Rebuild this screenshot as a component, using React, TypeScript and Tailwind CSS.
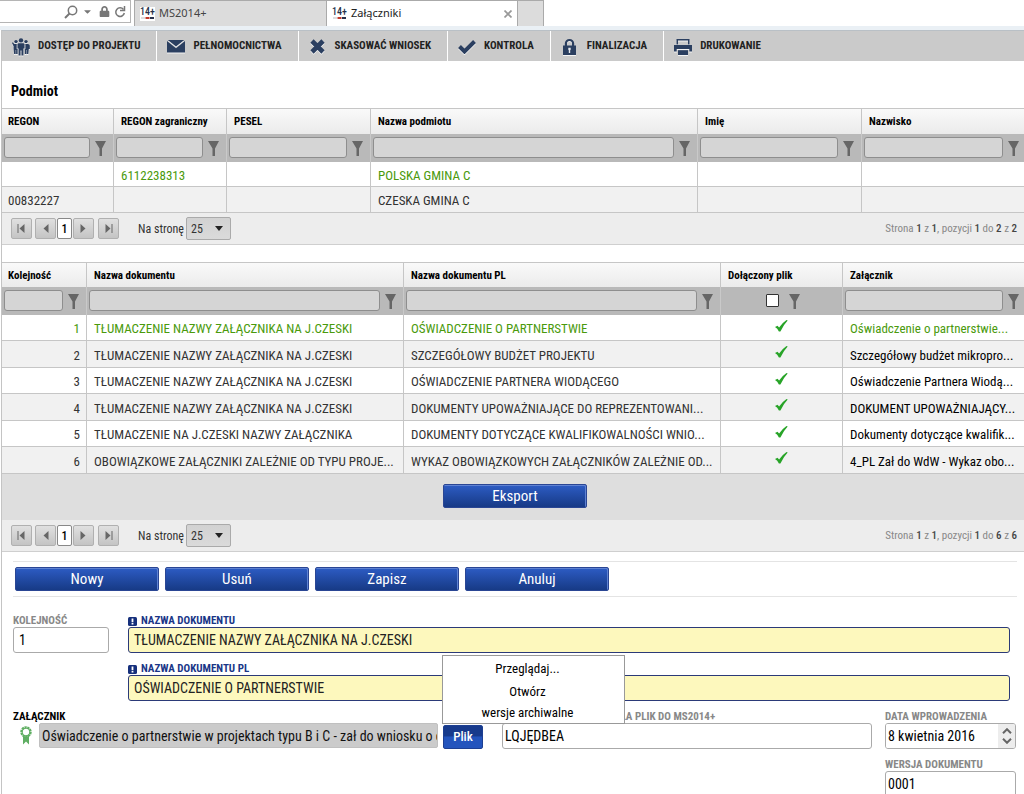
import React from "react";
import { FaCaretDown, FaLock } from "react-icons/fa";

const filterClass = "block h-[21px] min-w-0 flex-1 rounded-[3px] border border-[#8e8e8e] bg-[#d5d5d5] px-1 text-[13px] outline-none";

function Funnel() {
  return (
    <button type="button" aria-label="Filtruj" className="mt-px shrink-0">
      <svg width="11" height="15" viewBox="0 0 11 15" className="block" fill="#666">
        <path d="M0 0h11L7 7.5V15H4.500V7.500z" />
      </svg>
    </button>
  );
}

function TextFilter({ label }: { label: string }) {
  return (
    <div className="flex items-center gap-[5px] pr-[7px] pb-px pl-0.5 in-[td:last-child]:pr-[5px]">
      <input aria-label={label} className={filterClass} />
      <Funnel />
    </div>
  );
}

function BrandMark() {
  return (
    <span className="flex h-[14px] w-[15px] shrink-0 flex-col items-center bg-white font-['Roboto_Condensed','Roboto',sans-serif] text-[10px] leading-[10px] font-medium text-[#26304a]">
      14+
      <svg width="13" height="2" viewBox="0 0 13 2" className="block">
        <path d="M0 0h4v2H0z" fill="#ddd" />
        <path d="M4.500 0h4v2h-4z" fill="#c0392b" />
        <path d="M9 0h4v2H9z" fill="#26304a" />
      </svg>
    </span>
  );
}

function BrowserBar() {
  return (
    <div className="flex h-[26px] font-['Noto_Sans','Open_Sans',sans-serif] text-[11px] text-[#444]">
      <div className="flex h-[23px] w-[131px] items-center justify-end border-t border-r border-b border-[#b5b5b5] pr-1 text-[#777]">
        <svg width="14" height="14" viewBox="0 0 14 14" fill="none" stroke="currentColor" strokeWidth="1.500">
          <circle cx="8.500" cy="5.500" r="4.200" />
          <path d="M5.500 8.500 1 13" strokeWidth="2" />
        </svg>
        <FaCaretDown size={11} className="mr-1.5 ml-1" />
        <FaLock size={11} className="mr-1" />
        <svg width="12" height="12" viewBox="0 0 12 12" fill="none" stroke="currentColor" strokeWidth="1.500">
          <path d="M9.500 3.500A4.300 4.300 0 1 0 10.300 7" />
          <path d="M10.500 0v4.500H6" />
        </svg>
      </div>
      <a href="#ms" className="ml-[3px] flex h-full w-[192px] items-center gap-1 border-t border-l border-[#aaa] bg-[#dcdcdc] pl-[5px]">
        <BrandMark />
        <span>MS2014+</span>
      </a>
      <a href="#zal" className="flex h-full w-[191px] items-center gap-1 border-t border-l border-[#aaa] bg-white pl-[5px] text-[#222]">
        <BrandMark />
        <span className="flex-1">Załączniki</span>
        <svg width="8" height="8" viewBox="0 0 8 8" stroke="#999" strokeWidth="1.700" className="mr-[5px]">
          <path d="m.5.5 7 7M7.500.5l-7 7" />
        </svg>
      </a>
      <div className="h-full w-[27px] border-t border-r border-l border-[#aaa] bg-[#dcdcdc]" />
    </div>
  );
}

const halo = "block shrink-0 [filter:drop-shadow(0_1px_0_#f3f3f3)]";

const toolIcons: Record<string, React.ReactNode> = {
  people: (
    <svg width="18" height="18" viewBox="0 0 18 18" fill="#2b3f60" className={halo}>
      <circle cx="9" cy="2.400" r="2.200" />
      <circle cx="4" cy="3.600" r="1.700" />
      <circle cx="14" cy="3.600" r="1.700" />
      <path d="M6.500 5.300h5l1 .8v4.400h-1.100V17.500H9.500v-5h-1v5H6.600v-7H5.500V6.100z" />
      <path d="M2.200 6 .8 4.200 0 5l1.600 3.200v2.500l.5 5.300h1.600v-4h.4v4h1.500v-4.900H4.700V6z" />
      <path d="M15.800 6l1.400.4.600 1.300v3.400h-1l-.5 4.900h-1.600v-4h-.4v4h-1.500v-4.900h.6V6z" />
    </svg>
  ),
  mail: (
    <svg width="18" height="13" viewBox="0 0 18 14" preserveAspectRatio="none" fill="#2b3f60" className={halo}>
      <path d="M0 1.200V13.500h18V1.200L9 8.800z" />
      <path d="M.8 0h16.400L9 7z" />
    </svg>
  ),
  cross: (
    <svg width="15" height="15" viewBox="0 0 15 15" stroke="#2b3f60" strokeWidth="4.600" className={halo}>
      <path d="m2 2 11 11M13 2 2 13" />
    </svg>
  ),
  check: (
    <svg width="18" height="14" viewBox="0 0 18 14" fill="none" stroke="#2b3f60" strokeWidth="4" className={halo}>
      <path d="m1.500 6.500 5 5L16.500 1.500" />
    </svg>
  ),
  lock: (
    <svg width="13" height="16" viewBox="0 0 13 16" fill="#2b3f60" className={halo}>
      <path fillRule="evenodd" d="M0 6.500h1.800V4.600a4.700 4.600 0 0 1 9.400 0v1.900H13V16H0zM4 6.500h5V4.600a2.500 2.500 0 0 0-5 0z" />
      <path d="M5.300 8.800h2.400v2l-.5.500V14H5.800v-2.700l-.5-.5z" fill="#e6e9ee" />
    </svg>
  ),
  print: (
    <svg width="18" height="16" viewBox="0 0 18 16" fill="#2b3f60" className={halo}>
      <path fillRule="evenodd" d="M2.500 0h13v5.500h-13zM4 1.500v4h10v-4z" />
      <path fillRule="evenodd" d="M0 6h18v6.500h-2.700V10H2.700v2.500H0z" />
      <path d="M4 11.200h10V16H4z" />
    </svg>
  ),
};

const tools = [
  ["people", "DOSTĘP DO PROJEKTU"],
  ["mail", "PEŁNOMOCNICTWA"],
  ["cross", "SKASOWAĆ WNIOSEK"],
  ["check", "KONTROLA"],
  ["lock", "FINALIZACJA"],
  ["print", "DRUKOWANIE"],
];

function Toolbar() {
  return (
    <nav className="flex h-[31px] border-t border-[#b9c0c6] bg-[#cacaca]">
      {tools.map(([icon, label]) => (
        <button
          key={label}
          type="button"
          className="flex items-center gap-2 border-r border-white pt-px pr-4 pl-[10px] text-[11px] font-bold whitespace-nowrap text-[#222] last:border-r-0"
        >
          <span className="flex w-[18px] justify-center">{toolIcons[icon]}</span>
          {label}
        </button>
      ))}
    </nav>
  );
}

const pageButton = "flex h-[21px] w-[21px] items-center justify-center rounded-[2px] border border-[#b0b0b0] bg-linear-to-b from-[#e0e0e0] to-[#c4c4c4]";

function Arrow({ bar, flip }: { bar?: boolean; flip?: boolean }) {
  return (
    <svg width="9" height="9" viewBox="0 0 9 9" fill="#666" className={flip ? "block rotate-180" : "block"}>
      {bar && <path d="M.5 0h1v9h-1z" />}
      <path d="M7.500 0v9L2.500 4.500z" />
    </svg>
  );
}

function Pager({ id, total }: { id: string; total: number }) {
  return (
    <div className="flex h-8 items-center border-b border-[#cfcfcf] bg-[#ededed] pr-[7px] pl-[9px] text-xs text-[#333]">
      <button type="button" aria-label="Pierwsza strona" className={pageButton}><Arrow bar /></button>
      <button type="button" aria-label="Poprzednia strona" className={pageButton + " ml-[3px]"}><Arrow /></button>
      <button type="button" className="mx-px h-[21px] w-[15px] rounded-[2px] border border-[#888] bg-white text-xs leading-[18px] font-medium text-black">1</button>
      <button type="button" aria-label="Następna strona" className={pageButton}><Arrow flip /></button>
      <button type="button" aria-label="Ostatnia strona" className={pageButton + " ml-1"}><Arrow bar flip /></button>
      <label htmlFor={id} className="ml-[19px]">Na stronę</label>
      <div className="relative ml-0.5">
        <select id={id} className="block h-[23px] w-[45px] appearance-none rounded-[2px] border border-[#aaa] bg-linear-to-b from-[#d2d2d2] to-[#dadada] pl-1 text-xs">
          <option>25</option>
        </select>
        <svg width="8" height="5" viewBox="0 0 8 5" fill="#222" className="pointer-events-none absolute top-[9px] right-2">
          <path d="M0 0h8L4 5z" />
        </svg>
      </div>
      <p className="ml-auto pt-0.5 text-[11px] text-[#888]">
        Strona <b className="font-medium text-[#444]">1</b> z <b className="font-medium text-[#444]">1</b>, pozycji <b className="font-medium text-[#444]">1</b> do{" "}
        <b className="font-medium text-[#444]">{total}</b> z <b className="font-medium text-[#444]">{total}</b>
      </p>
    </div>
  );
}

const tableClass = "w-full table-fixed border-separate border-spacing-0 text-left";
const headClass = "border-t border-r border-[#c6c6c6] pt-0.5 pr-1.5 pb-0 pl-[7px] text-[11px] font-bold whitespace-nowrap text-black first:pl-1.5 last:border-r-0";
const headRow = "bg-linear-to-b from-[#fafafa] to-[#ebebeb]";
const filterRow = "h-7 bg-[#b9b9b9]";
const filterCell = "border-r border-[#c9c9c9] p-0 last:border-r-0";
const cell = "truncate border-r border-b border-[#c6c6c6] pt-[3px] pr-1.5 pb-0 pl-[7px] first:pl-1.5 last:border-r-0";

const subjectColumns = ["REGON", "REGON zagraniczny", "PESEL", "Nazwa podmiotu", "Imię", "Nazwisko"];
const subjects = [
  ["", "6112238313", "", "POLSKA GMINA C", "", ""],
  ["00832227", "", "", "CZESKA GMINA C", "", ""],
];

function SubjectTable() {
  return (
    <table className={tableClass}>
      <colgroup>
        <col className="w-[112px]" />
        <col className="w-[113px]" />
        <col className="w-[144px]" />
        <col />
        <col className="w-[164px]" />
        <col className="w-[162px]" />
      </colgroup>
      <thead>
        <tr className={headRow + " h-[26px]"}>
          {subjectColumns.map((c) => <th key={c} className={headClass}>{c}</th>)}
        </tr>
        <tr className={filterRow}>
          {subjectColumns.map((c) => <td key={c} className={filterCell}><TextFilter label={c} /></td>)}
        </tr>
      </thead>
      <tbody className="text-[13px]">
        {subjects.map((row, i) => (
          <tr key={i} className={i === 0 ? "h-[25px] bg-white text-[#4a9a0c]" : "h-[26px] bg-[#f1f1f1] text-[#333]"}>
            {row.map((v, j) => <td key={j} className={cell}>{v}</td>)}
          </tr>
        ))}
      </tbody>
    </table>
  );
}

const documents = [
  ["TŁUMACZENIE NAZWY ZAŁĄCZNIKA NA J.CZESKI", "OŚWIADCZENIE O PARTNERSTWIE", "Oświadczenie o partnerstwie..."],
  ["TŁUMACZENIE NAZWY ZAŁĄCZNIKA NA J.CZESKI", "SZCZEGÓŁOWY BUDŻET PROJEKTU", "Szczegółowy budżet mikropro..."],
  ["TŁUMACZENIE NAZWY ZAŁĄCZNIKA NA J.CZESKI", "OŚWIADCZENIE PARTNERA WIODĄCEGO", "Oświadczenie Partnera Wiodą..."],
  ["TŁUMACZENIE NAZWY ZAŁĄCZNIKA NA J.CZESKI", "DOKUMENTY UPOWAŻNIAJĄCE DO REPREZENTOWANI...", "DOKUMENT UPOWAŻNIAJĄCY..."],
  ["TŁUMACZENIE NA J.CZESKI NAZWY ZAŁĄCZNIKA", "DOKUMENTY DOTYCZĄCE KWALIFIKOWALNOŚCI WNIO...", "Dokumenty dotyczące kwalifik..."],
  ["OBOWIĄZKOWE ZAŁĄCZNIKI ZALEŻNIE OD TYPU PROJE...", "WYKAZ OBOWIĄZKOWYCH ZAŁĄCZNIKÓW ZALEŻNIE OD...", "4_PL Zał do WdW - Wykaz obo..."],
];

function DocumentTable() {
  return (
    <table className={tableClass}>
      <colgroup>
        <col className="w-[85px]" />
        <col />
        <col />
        <col className="w-[122px]" />
        <col className="w-[181px]" />
      </colgroup>
      <thead>
        <tr className={headRow + " h-[25px]"}>
          {["Kolejność", "Nazwa dokumentu", "Nazwa dokumentu PL", "Dołączony plik", "Załącznik"].map((c) => (
            <th key={c} className={headClass}>{c}</th>
          ))}
        </tr>
        <tr className={filterRow}>
          <td className={filterCell}><TextFilter label="Kolejność" /></td>
          <td className={filterCell}><TextFilter label="Nazwa dokumentu" /></td>
          <td className={filterCell}><TextFilter label="Nazwa dokumentu PL" /></td>
          <td className={filterCell}>
            <div className="flex items-center justify-center gap-2.5 pb-px pl-0.5">
              <input type="checkbox" aria-label="Dołączony plik" className="h-[13px] w-[13px] appearance-none rounded-[1px] border border-[#333] bg-white" />
              <Funnel />
            </div>
          </td>
          <td className={filterCell}><TextFilter label="Załącznik" /></td>
        </tr>
      </thead>
      <tbody className="text-[13px]">
        {documents.map(([name, namePl, file], i) => (
          <tr key={i} className={i === 0 ? "h-[26px] bg-white text-[#4a9a0c]" : "text-[#333] odd:h-[26px] odd:bg-white even:h-[27px] even:bg-[#f1f1f1]"}>
            <td className={cell + " text-right"}>{i + 1}</td>
            <td className={cell}>{name}</td>
            <td className={cell}>{namePl}</td>
            <td className="border-r border-b border-[#c6c6c6] p-0">
              <svg width="13" height="12" viewBox="0 0 13 12" fill="#28a428" className="mx-auto mb-1 block" role="img" aria-label="Tak">
                <path d="M0 7 2.500 5.800l1.600 1.700Q7 3 11.500 0l1.200.6Q8.500 5 5.400 11.500H3.900Q2.500 8 0 7z" />
              </svg>
            </td>
            <td className={cell + (i === 0 ? "" : " text-black")}>{file}</td>
          </tr>
        ))}
      </tbody>
    </table>
  );
}

function BlueButton({ children }: { children: React.ReactNode }) {
  return (
    <button type="button" className="h-6 w-[144px] rounded-[2px] border border-[#2a4694] bg-linear-to-b from-[#2d5cc4] to-[#173a86] text-[15px] leading-[22px] text-white shadow-[inset_-1px_1px_0_#5f82d2]">
      {children}
    </button>
  );
}

const fieldLabel = "flex h-[14px] items-center gap-1 pt-0.5 text-[11px] leading-3 font-bold whitespace-nowrap";
const field = "block h-[26px] w-full rounded-[3px] border text-sm outline-none";

function RequiredField({ id, label, value }: { id: string; label: string; value: string }) {
  return (
    <div className="pb-2">
      <label htmlFor={id} className={fieldLabel + " text-[#1a3687]"}>
        <svg width="9" height="9" viewBox="0 0 9 9" className="block">
          <rect width="9" height="9" rx="1.500" fill="#16307c" />
          <path d="M3.600 1.500h1.800v3.700H3.600zM3.600 6h1.800v1.500H3.600z" fill="#fff" />
        </svg>
        {label}
      </label>
      <input id={id} defaultValue={value} className={field + " border-[#2b3a78] bg-[#fdf8bd] px-[5px] text-[#222]"} />
    </div>
  );
}

function FileMenu() {
  return (
    <div className="absolute bottom-full -left-px z-10 flex w-[183px] flex-col border border-[#999] bg-white pt-0.5 pr-3 text-[13px] text-black">
      <button type="button" className="h-[22px]">Przeglądaj...</button>
      <button type="button" className="h-[23px]">Otwórz</button>
      <button type="button" className="h-[20px]">wersje archiwalne</button>
    </div>
  );
}

export default function App() {
  return (
    <div className="h-screen overflow-hidden bg-white font-['Roboto_Condensed','Liberation_Sans_Narrow','Roboto',sans-serif]">
      <BrowserBar />
      <div className="h-1 bg-[#eaf0f5]" />
      <main className="ml-px border-l border-[#c4c4c4]">
        <Toolbar />
        <h1 className="flex h-[47px] items-center pt-3 pl-[9px] text-sm font-bold text-black">Podmiot</h1>
        <SubjectTable />
        <Pager id="size-subjects" total={2} />
        <div className="mt-[17px]">
          <DocumentTable />
          <div className="flex h-[46px] items-center justify-center bg-[#dedede] pb-0.5 pl-1">
            <BlueButton>Eksport</BlueButton>
          </div>
          <Pager id="size-documents" total={6} />
        </div>
        <form className="pt-[9px] pr-[7px] pl-[11px]" onSubmit={(e) => e.preventDefault()}>
          <div className="flex gap-1.5 border-y border-[#e4e4e4] py-[5px] pl-0.5">
            <BlueButton>Nowy</BlueButton>
            <BlueButton>Usuń</BlueButton>
            <BlueButton>Zapisz</BlueButton>
            <BlueButton>Anuluj</BlueButton>
          </div>
          <div className="mt-4 flex">
            <div className="mr-[19px] w-24 shrink-0">
              <label htmlFor="order" className={fieldLabel + " text-[#888]"}>KOLEJNOŚĆ</label>
              <input id="order" defaultValue="1" className={field + " border-[#aaa] bg-white px-[5px] text-black"} />
            </div>
            <div className="mr-[7px] flex-1">
              <RequiredField id="name" label="NAZWA DOKUMENTU" value="TŁUMACZENIE NAZWY ZAŁĄCZNIKA NA J.CZESKI" />
              <RequiredField id="name-pl" label="NAZWA DOKUMENTU PL" value="OŚWIADCZENIE O PARTNERSTWIE" />
            </div>
          </div>
          <div className="flex pr-px">
            <div className="w-[470px]">
              <label htmlFor="file" className={fieldLabel + " text-black"}>ZAŁĄCZNIK</label>
              <div className="flex items-start">
                <svg width="12" height="19" viewBox="0 0 12 19" className="mx-[7px] mt-[3px] block shrink-0">
                  <path d="M3 9.500h6V18.500L6 15.500l-3 3z" fill="#5fae62" />
                  <circle cx="6" cy="6" r="4.600" fill="#fff" stroke="#5fae62" strokeWidth="2.300" strokeDasharray="2.200 .6" />
                  <circle cx="6" cy="6" r="3.900" fill="none" stroke="#5fae62" strokeWidth="1" />
                </svg>
                <input id="file" readOnly defaultValue="Oświadczenie o partnerstwie w projektach typu B i C - zał do wniosku o dofinansowanie" className="block h-[25px] min-w-0 flex-1 rounded-[2px] border border-[#c0c0c0] bg-[#cbcbcb] pl-0.5 text-sm text-[#111] outline-none" />
                <div className="relative mt-px ml-[5px] pt-px">
                  <button type="button" className="block h-6 w-10 rounded-[2px] border border-[#1d3f92] bg-linear-to-b from-[#173a8c] from-45% to-[#2354bd] to-50% text-[13px] leading-[22px] font-medium text-white">Plik</button>
                  <FileMenu />
                </div>
              </div>
            </div>
            <div className="ml-[19px] flex-1">
              <label htmlFor="sender" className={fieldLabel + " text-[#888]"}>OSOBA, KTÓRA PRZESYŁAŁA PLIK DO MS2014+</label>
              <input id="sender" defaultValue="LQJĘDBEA" className={field + " border-[#aaa] bg-white px-0.5 text-black"} />
            </div>
            <div className="ml-[13px] w-[131px]">
              <label htmlFor="date" className={fieldLabel + " text-[#888]"}>DATA WPROWADZENIA</label>
              <div className="flex h-[26px] overflow-hidden rounded-[3px] border border-[#aaa]">
                <input id="date" defaultValue="8 kwietnia 2016" className="block min-w-0 flex-1 bg-white px-0.5 text-sm text-black outline-none" />
                <div className="flex w-[17px] flex-col items-center justify-center gap-1 bg-[#ededed]">
                  <button type="button" aria-label="Następny dzień">
                    <svg width="10" height="6" viewBox="0 0 10 6" fill="none" stroke="#666" strokeWidth="2" className="block"><path d="m1 5.200 4-4 4 4" /></svg>
                  </button>
                  <button type="button" aria-label="Poprzedni dzień">
                    <svg width="10" height="6" viewBox="0 0 10 6" fill="none" stroke="#666" strokeWidth="2" className="block"><path d="m1 .8 4 4 4-4" /></svg>
                  </button>
                </div>
              </div>
              <div className="pt-2">
                <label htmlFor="version" className={fieldLabel + " text-[#888]"}>WERSJA DOKUMENTU</label>
                <input id="version" defaultValue="0001" className={field + " border-[#aaa] bg-white px-0.5 text-black"} />
              </div>
            </div>
          </div>
        </form>
      </main>
    </div>
  );
}
